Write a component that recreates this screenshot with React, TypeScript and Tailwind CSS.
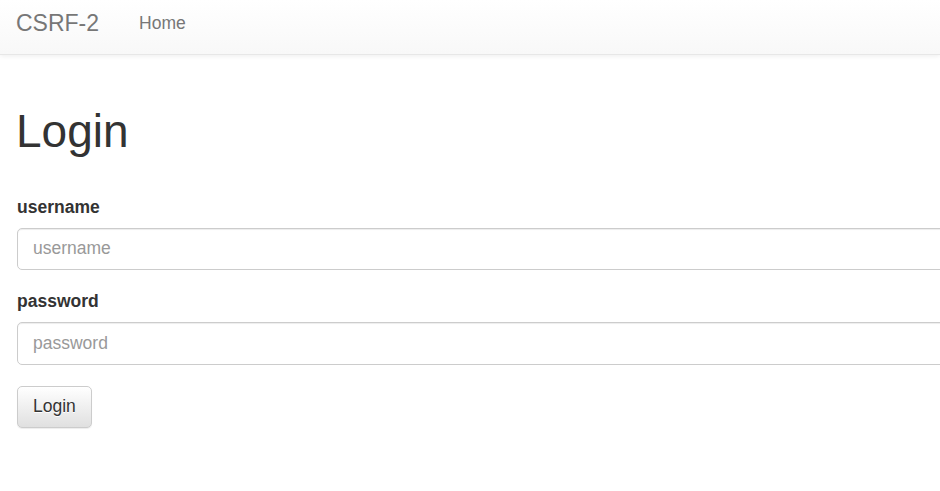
export default function App() {
  return (
    <div className="w-full min-h-[491px] overflow-hidden bg-white text-[#333] font-['Liberation_Sans',Arial,sans-serif]">
      <nav className="h-[55px] border-b border-[#e7e7e7] bg-gradient-to-b from-white to-[#f8f8f8] shadow-[0_1px_5px_rgba(0,0,0,0.075)]">
        <div className="flex items-start pl-[16px] pt-[11px]">
          <a className="text-[23px] leading-[25px] text-[#777]">CSRF-2</a>
          <a className="ml-[40px] text-[17.5px] leading-[25px] text-[#777]">Home</a>
        </div>
      </nav>

      <div className="w-[1000px] pl-[17px] pt-[52px]">
        <h1 className="-ml-[1px] text-[46px] leading-[49.5px] font-medium">Login</h1>

        <form className="mt-[38px]" onSubmit={(e) => e.preventDefault()}>
          <div className="mb-[19px]">
            <label className="block mb-[8px] text-[17.5px] leading-[25px] font-bold">username</label>
            <input
              type="text"
              placeholder="username"
              className="block w-full h-[42.5px] px-[15px] text-[17.5px] text-[#555] placeholder:text-[#999] border border-[#ccc] rounded-[5px] shadow-[inset_0_1px_1px_rgba(0,0,0,0.075)] outline-none"
            />
          </div>
          <div className="mb-[21px]">
            <label className="block mb-[8px] text-[17.5px] leading-[25px] font-bold">password</label>
            <input
              type="password"
              placeholder="password"
              className="block w-full h-[42.5px] px-[15px] text-[17.5px] text-[#555] placeholder:text-[#999] border border-[#ccc] rounded-[5px] shadow-[inset_0_1px_1px_rgba(0,0,0,0.075)] outline-none"
            />
          </div>
          <button
            type="submit"
            className="h-[42px] px-[15px] text-[17.5px] leading-[25px] text-[#333] border border-[#ccc] rounded-[5px] bg-gradient-to-b from-white to-[#e0e0e0] shadow-[0_1px_1px_rgba(0,0,0,0.075)] [text-shadow:0_1px_0_#fff]"
          >
            Login
          </button>
        </form>
      </div>
    </div>
  );
}
